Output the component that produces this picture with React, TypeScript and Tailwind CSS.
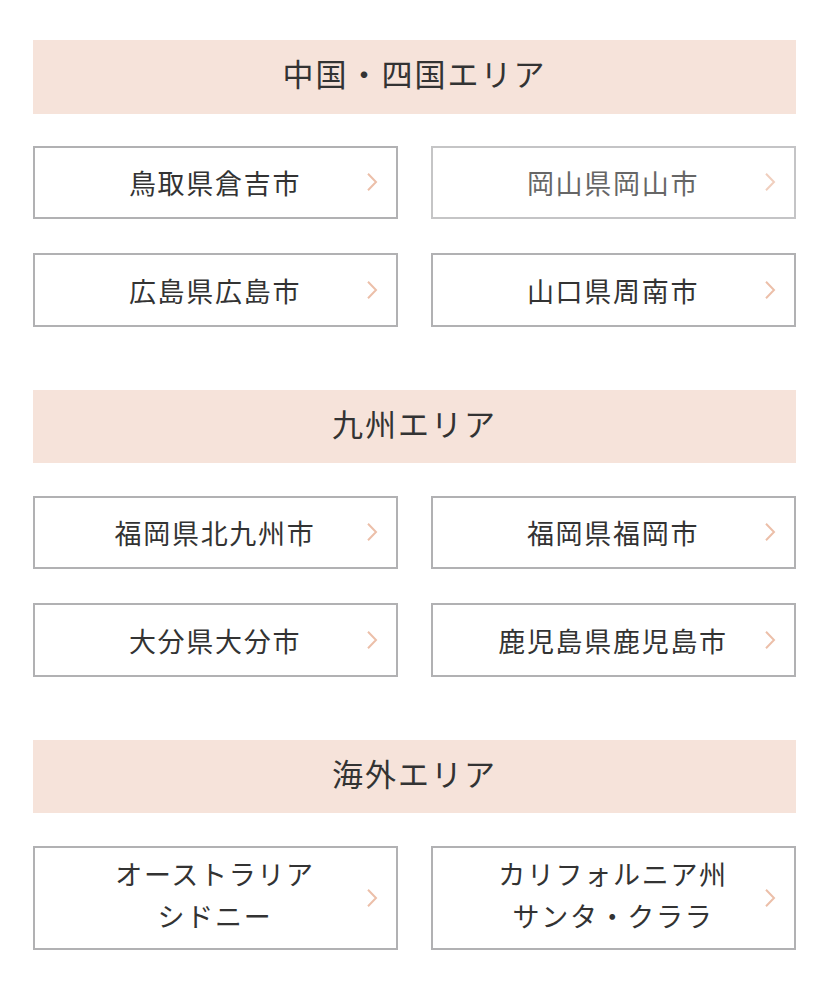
const areas = [
    {
        name: "中国・四国エリア",
        shops: [
            { label: ["鳥取県倉吉市"] },
            { label: ["岡山県岡山市"], faded: true },
            { label: ["広島県広島市"] },
            { label: ["山口県周南市"] },
        ],
    },
    {
        name: "九州エリア",
        shops: [
            { label: ["福岡県北九州市"] },
            { label: ["福岡県福岡市"] },
            { label: ["大分県大分市"] },
            { label: ["鹿児島県鹿児島市"] },
        ],
    },
    {
        name: "海外エリア",
        shops: [
            { label: ["オーストラリア", "シドニー"] },
            { label: ["カリフォルニア州", "サンタ・クララ"] },
        ],
    },
];

type Shop = { label: string[]; faded?: boolean };

function ShopLink({ shop }: { shop: Shop }) {
    const tall = shop.label.length > 1;

    return (
        <a
            href="#"
            className={`flex items-center border-2 border-[#b1b1b3] pr-[17px] ${tall ? "h-[104.5px]" : "h-[73.5px]"} ${shop.faded ? "opacity-75" : ""}`}
        >
            <span className={`flex-1 pl-[29px] text-center text-[27px] leading-[42px] tracking-[1.7px] ${tall ? "pb-[5px]" : "pt-[2px]"}`}>
                {shop.label.map((line) => (
                    <span key={line} className="block whitespace-nowrap">{line}</span>
                ))}
            </span>
            <svg className="h-[20px] w-[13px] shrink-0" viewBox="0 0 13 20" fill="none" stroke="#ecbfa9" strokeWidth="2">
                <path d="M2 1.8 L10 10 L2 18.2" />
            </svg>
        </a>
    );
}

function App() {
    return (
        <main className="flex h-[1000px] w-[829px] flex-col gap-[63.4px] overflow-hidden bg-white px-[33px] pt-10 font-['Noto_Sans_CJK_JP',sans-serif] text-[#333]">
            {areas.map((area) => (
                <section key={area.name}>
                    <h2 className="flex h-[73.5px] items-center justify-center bg-[#f6e3da] pb-[7px] text-[31px] tracking-[2px]">
                        {area.name}
                    </h2>
                    <div className="mt-[32.2px] grid grid-cols-2 gap-x-[33px] gap-y-[33.9px]">
                        {area.shops.map((shop) => (
                            <ShopLink key={shop.label[0]} shop={shop} />
                        ))}
                    </div>
                </section>
            ))}
        </main>
    );
}

export default App;
